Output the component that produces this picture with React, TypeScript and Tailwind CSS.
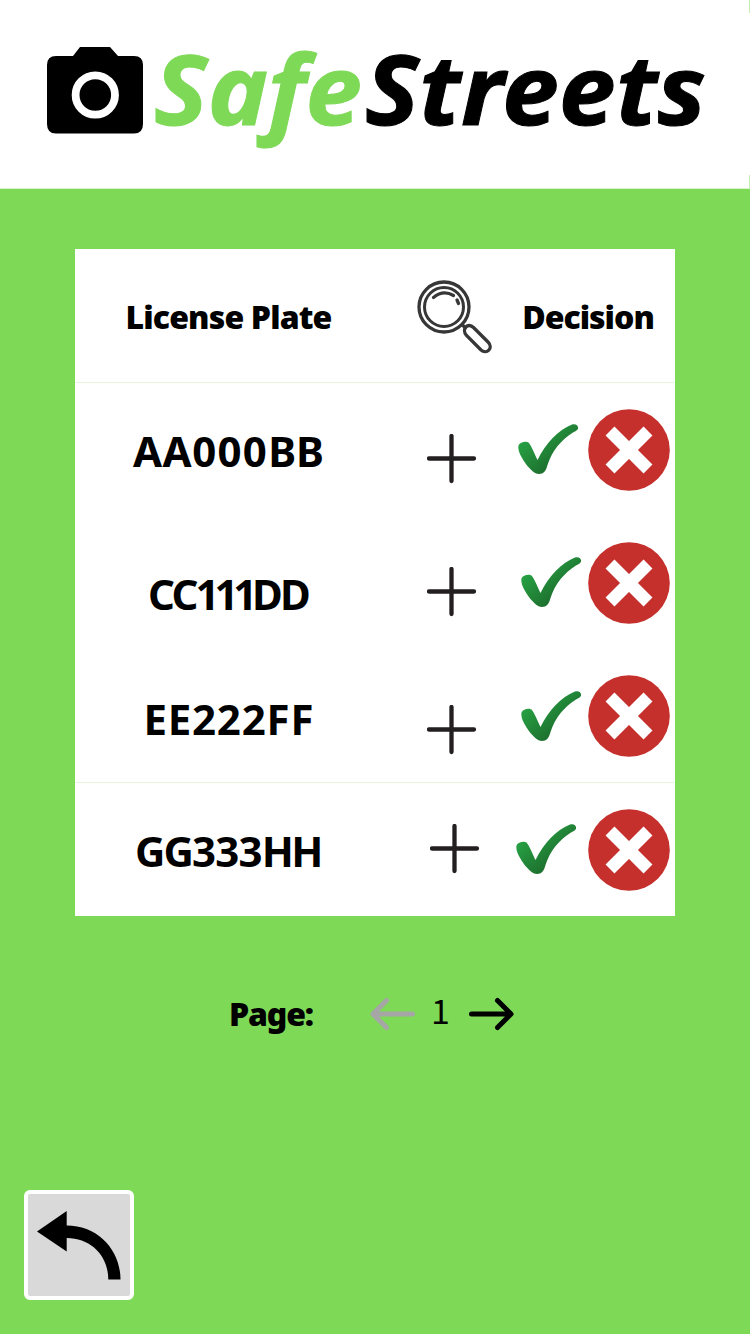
type Row = { parts: [string, string][]; text: string; plus: string; check: string; cross: string; cell: string };

const rows: Row[] = [
  {
    parts: [['AA', 'tracking-[0.5px]'], ['000', 'tracking-[1.3px]'], ['BB', 'tracking-[0px]']],
    text: 'mt-[40px]', plus: 'mt-[51px] ml-[45px]', check: 'mt-[41px] ml-[2.5px]', cross: 'mt-[26px]', cell: 'h-[133px]',
  },
  {
    parts: [['CC', 'tracking-[-2.8px]'], ['111', 'tracking-[-5.2px]'], ['DD', 'tracking-[-2.8px]']],
    text: 'mt-[50px] pr-[1px]', plus: 'mt-[51px] ml-[45px]', check: 'mt-[41px] ml-[5.5px]', cross: 'mt-[26px]', cell: 'h-[133px]',
  },
  {
    parts: [['EE', 'tracking-[0.8px]'], ['222', 'tracking-[0.8px]'], ['FF', 'tracking-[1px]']],
    text: 'mt-[42px] pl-[1px]', plus: 'mt-[56px] ml-[45px]', check: 'mt-[42px] ml-[5.5px]', cross: 'mt-[26px]', cell: 'h-[133px]',
  },
  {
    parts: [['GG', 'tracking-[-2px]'], ['333', 'tracking-[-0.8px]'], ['HH', 'tracking-[-2.5px]']],
    text: 'mt-[40px] pr-[1px]', plus: 'mt-[41px] ml-[47.5px]', check: 'mt-[41px] ml-[0.5px]', cross: 'mt-[26px]', cell: 'h-[133px] border-t border-[#e5f7dd]',
  },
];

function Logo() {
  return (
    <svg className="h-[188px] w-[750px]" viewBox="0 0 750 188">
      <path d="M80 47H110L118 56H134Q143 56 143 65V124Q143 133.500 134 133.500H56Q47 133.500 47 124V65Q47 56 56 56H73Z" />
      <circle cx="95.300" cy="95" r="19.700" fill="none" stroke="#fff" strokeWidth="7.800" />
      <g className="font-['Noto_Sans',sans-serif] font-bold italic" fontSize="96" strokeWidth="1">
        <text x="154" y="124.500" fill="#7ed957" stroke="#7ed957" textLength="208" lengthAdjust="spacingAndGlyphs">Safe</text>
        <text x="365" y="124.500" stroke="#000" textLength="341" lengthAdjust="spacingAndGlyphs">Streets</text>
      </g>
    </svg>
  );
}

function Magnifier() {
  return (
    <svg className="h-[80px] w-[80px]" viewBox="0 0 80 80" fill="none" stroke="#383738" strokeWidth="3.300" strokeLinecap="round">
      <circle cx="29" cy="30" r="25" />
      <circle cx="29" cy="30" r="19.500" strokeWidth="3" />
      <path d="M18.500 20.500Q28 12.500 38.500 18.500M42 23L43.500 26.500M47.500 48L50 50.500" />
      <path d="M51.500 58.500C46 52 53 45 58.500 50.500L73 65C79 71 71.500 78 66 73Z" />
    </svg>
  );
}

function Plus() {
  return (
    <svg className="h-[50px] w-[50px]" viewBox="0 0 50 50">
      <path d="M2 24.500H47M24.500 2V47" stroke="#231f20" strokeWidth="4.300" strokeLinecap="round" />
    </svg>
  );
}

function Check() {
  return (
    <svg className="h-[50px] w-[61px]" viewBox="0 0 61 50">
      <defs>
        <linearGradient id="leaf" x1="0" y1="0.300" x2="0.600" y2="0.900">
          <stop offset="0.100" stopColor="#27a043" />
          <stop offset="1" stopColor="#1c6b2c" />
        </linearGradient>
      </defs>
      <path fill="url(#leaf)" d="M.5 21.500C2 17.500 8.500 17 10.500 18.500C13.500 22 16.500 30 19.500 36C28 19 40 6 54 .5C58.500 -1 61.500 3 59.500 5.500C59 6.500 57 7.500 55 8.500C43 16 34 27 29.500 41C28 47 25.500 50 21 50C14 50 4 36 1 27.500Q0 24 .5 21.500Z" />
    </svg>
  );
}

function Cross() {
  return (
    <svg className="h-[82px] w-[82px]" viewBox="0 0 82 82">
      <circle cx="41" cy="41" r="40.800" fill="#c5302c" />
      <path d="M22 22L60 60M60 22L22 60" stroke="#fff" strokeWidth="12.600" />
    </svg>
  );
}

function ArrowRight({ className }: { className: string }) {
  return (
    <svg className={className} viewBox="0 0 46 34" fill="none" stroke="currentColor" strokeWidth="5" strokeLinecap="round" strokeLinejoin="round">
      <path d="M3.500 17H42M29.500 3.500L43 17L29.500 30.500" />
    </svg>
  );
}

export default function App() {
  return (
    <div className="flex h-[1334px] w-[750px] flex-col bg-[#7ed957] font-['Noto_Sans',sans-serif] text-black">
      <header className="relative h-[189px] border-b border-[#d8f4cd] bg-white">
        <Logo />
        <div className="absolute top-0 right-0 h-[13px] w-px bg-[#c3edb1]" />
        <div className="absolute right-0 bottom-0 h-[13px] w-px bg-[#c3edb1]" />
      </header>

      <main className="mt-[60px] ml-[75px] h-[667px] w-[600px] bg-white">
        <div className="flex h-[134px] items-start border-b border-[#e5f7dd] text-[32px] leading-[44px] font-black">
          <div className="mt-[46px] w-[307px] text-center tracking-[-0.85px] whitespace-nowrap">License Plate</div>
          <div className="mt-[28px] ml-[33px]"><Magnifier /></div>
          <div className="mt-[46px] ml-[26px] w-[134px] text-center tracking-[-1px] whitespace-nowrap">Decision</div>
        </div>
        {rows.map((r, i) => (
          <div key={i} className={`flex items-start ${r.cell}`}>
            <div className={`w-[307px] text-center text-[42px] leading-[56px] font-bold whitespace-nowrap ${r.text}`}>
              {r.parts.map(([label, tracking]) => (
                <span key={label} className={tracking}>{label}</span>
              ))}
            </div>
            <div className="w-[133px]">
              <div className={`w-[50px] ${r.plus}`}><Plus /></div>
            </div>
            <div className="w-[73px]">
              <div className={`w-[61px] ${r.check}`}><Check /></div>
            </div>
            <div className={r.cross}><Cross /></div>
          </div>
        ))}
      </main>

      <nav className="mt-[72px] ml-[229px] flex h-[50px] items-start">
        <div className="mt-[4px] w-[85px] text-[32px] leading-[44px] font-black tracking-[-1.2px] whitespace-nowrap">Page:</div>
        <ArrowRight className="mt-[9px] ml-[56px] h-[34px] w-[46px] rotate-180 text-[#a6a6a6]" />
        <div className="ml-[15px] w-[20px] font-['Noto_Sans_CJK_SC',sans-serif] text-[34px] leading-[44px]">1</div>
        <ArrowRight className="mt-[9px] ml-[17px] h-[34px] w-[46px]" />
      </nav>

      <button className="mt-[152px] ml-[24px] flex h-[110px] w-[110px] rounded-[6px] border-4 border-white bg-[#d9d9d9]">
        <svg className="h-[102px] w-[102px]" viewBox="28 1194 102 102">
          <path d="M37 1231.500L66.700 1211V1225.500C98 1225.500 120.500 1250 120.500 1279.500H108.300C108.300 1256 91 1238 66.700 1238V1251.500Z" />
        </svg>
      </button>
    </div>
  );
}
